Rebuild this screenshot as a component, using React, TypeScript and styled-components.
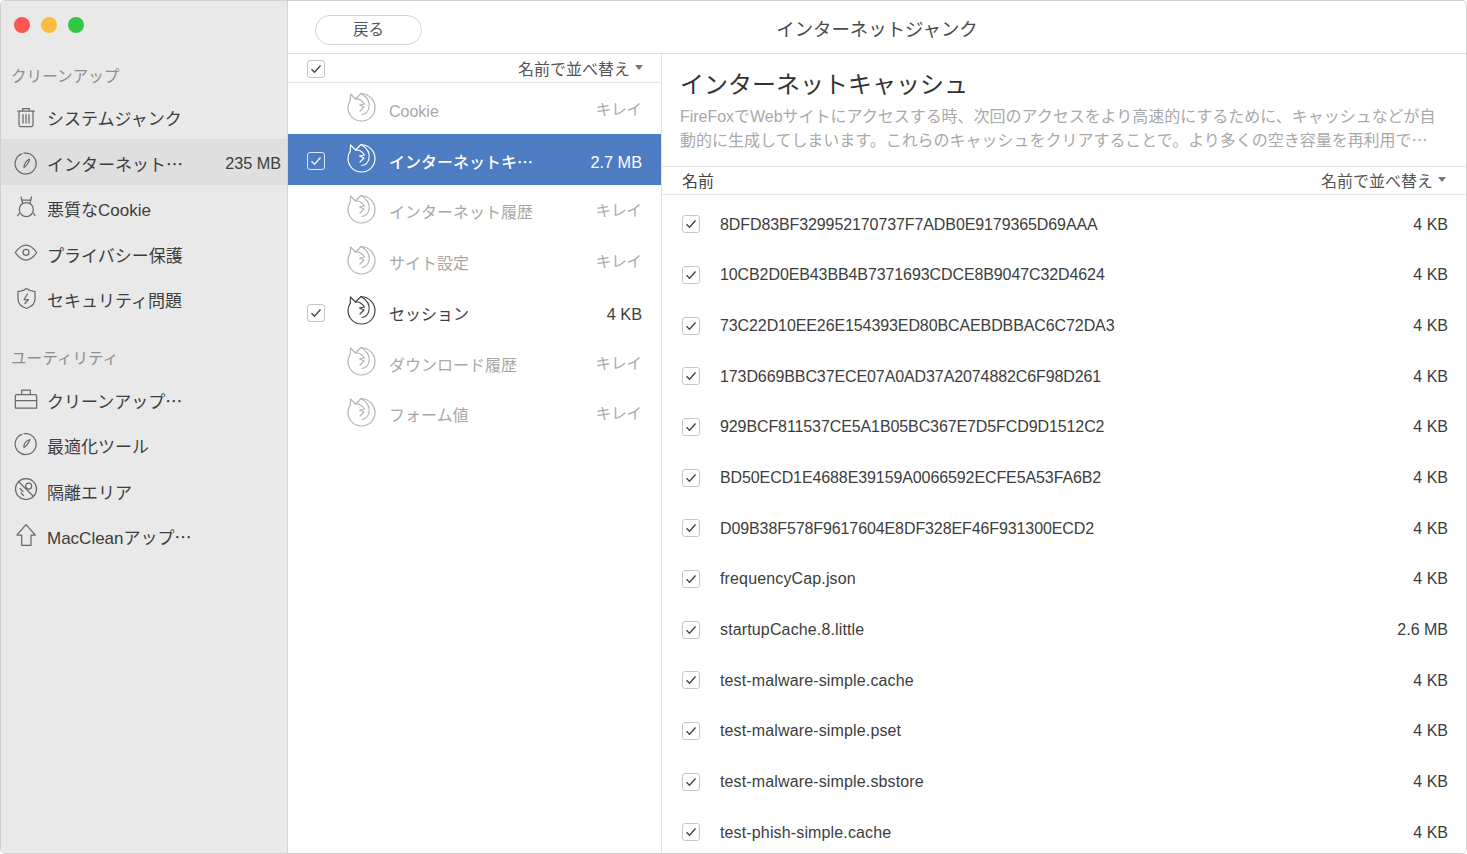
import React from "react";
import styled, { createGlobalStyle } from "styled-components";

const Global = createGlobalStyle`
  html, body { margin: 0; padding: 0; background: #fff; }
  body { font-family: "Liberation Sans", "Noto Sans CJK JP", sans-serif; }
  * { box-sizing: border-box; }
`;

const Win = styled.div`
  width: 1467px; height: 854px; display: flex; overflow: hidden;
  border: 1px solid #cfcfcf; border-radius: 5px; background: #fff;
`;
const Sidebar = styled.aside`
  width: 287px; flex: none; background: #e9e9e9; border-right: 1px solid #d4d4d4;
  display: flex; flex-direction: column;
`;
const Lights = styled.div`
  display: flex; gap: 11px; padding: 16px 0 0 13px; height: 60px;
`;
const Light = styled.span<{ $c: string }>`
  width: 16px; height: 16px; border-radius: 50%; background: ${p => p.$c};
`;
const SectionLabel = styled.div<{ $top: number; $bottom: number }>`
  font-size: 15.6px; line-height: 30px; height: 28px; color: #8d8d8d; padding-left: 10px;
  margin-top: ${p => p.$top}px; margin-bottom: ${p => p.$bottom}px;
`;
const NavItem = styled.div<{ $active?: boolean }>`
  height: ${p => (p.$active ? 46 : 45.5)}px; display: flex; align-items: center; padding: ${p => (p.$active ? 2 : 0)}px 6px 0 12px; gap: 9px;
  margin: ${p => (p.$active ? "-1.5px 0 1px" : "0")};
  background: ${p => (p.$active ? "#dfdfdf" : "transparent")}; color: #3d3d3d; font-size: 17px;
`;
const NavLabel = styled.span`flex: 1; white-space: nowrap;`;
const NavValue = styled.span`font-size: 16.2px; color: #3d3d3d;`;
const NavIcon = styled.svg`
  width: 25px; height: 26px; flex: none; fill: none; stroke: #6a6a6a; stroke-width: 1.25;
  stroke-linecap: round; stroke-linejoin: round;
`;

const Main = styled.div`flex: 1; display: flex; flex-direction: column; min-width: 0;`;
const TopBar = styled.header`
  height: 53px; flex: none; border-bottom: 1px solid #dcdcdc; display: grid;
  grid-template-columns: 1fr auto 1fr; align-items: center;
`;
const BackButton = styled.button`
  justify-self: start; width: 107px; height: 30px; border: 1px solid #d3d3d3; border-radius: 15px;
  background: #fff; color: #555; font: inherit; font-size: 15.5px; padding: 0 0 4px; margin: 5px 0 0 27px;
`;
const WindowTitle = styled.div`font-size: 18.4px; color: #4a4a4a; padding-top: 2px;`;

const Panes = styled.div`flex: 1; display: flex; min-height: 0;`;
const Middle = styled.section`
  width: 374px; flex: none; border-right: 1px solid #e2e2e2; display: flex; flex-direction: column;
`;
const MiddleHead = styled.div`
  height: 29px; flex: none; border-bottom: 1px solid #e6e6e6; display: flex; align-items: center;
  justify-content: space-between; padding: 0 18px 0 19px;
`;
const HeadBox = styled.span`display: flex; margin-top: 2px;`;
const Sort = styled.span`
  font-size: 16px; color: #555; display: inline-flex; align-items: center; gap: 5px; white-space: nowrap;
  &::after {
    content: ""; border-left: 4.5px solid transparent; border-right: 4.5px solid transparent;
    border-top: 5px solid #777; margin-top: -1px;
  }
`;
const Box = styled.span<{ $inverse?: boolean }>`
  width: 18px; height: 18px; flex: none; display: inline-flex; align-items: center; justify-content: center;
  border: 1px solid ${p => (p.$inverse ? "#dfe8f6" : "#c6c6c6")}; border-radius: 3px;
  background: ${p => (p.$inverse ? "transparent" : "#fff")};
`;
const Tick = styled.svg<{ $inverse?: boolean }>`
  width: 12px; height: 10px; fill: none; stroke-width: 1.4;
  stroke: ${p => (p.$inverse ? "#eaf0fa" : "#444")};
`;
const CategoryRow = styled.div<{ $selected?: boolean }>`
  height: 50.75px; display: flex; align-items: center; padding: 0 19px;
  background: ${p => (p.$selected ? "#4e7cc2" : "transparent")};
`;
const BoxSlot = styled.span`width: 18px; flex: none; display: flex; margin-top: 4px;`;
const FoxIcon = styled.svg<{ $tone: string }>`
  width: 30px; height: 31px; flex: none; margin: -1px 0 0 22px; fill: none; stroke: ${p => p.$tone};
  stroke-width: 1.2; stroke-linecap: round; stroke-linejoin: round;
`;
const CatName = styled.span<{ $tone: string; $bold?: boolean }>`
  flex: 1; margin-left: 12px; font-size: 16px; line-height: 20px; color: ${p => p.$tone};
  font-weight: ${p => (p.$bold ? 500 : 400)}; white-space: nowrap; margin-top: 7px;
`;
const CatValue = styled.span<{ $tone: string; $muted?: boolean; $bold?: boolean }>`
  font-size: ${p => (p.$muted ? 15.4 : 16.3)}px; color: ${p => p.$tone}; white-space: nowrap;
  margin-top: ${p => (p.$muted ? -1 : 7)}px; font-weight: ${p => (p.$bold ? 500 : 400)};
`;

const Detail = styled.section`flex: 1; display: flex; flex-direction: column; min-width: 0;`;
const Intro = styled.div`
  height: 113px; flex: none; padding: 14px 18px 0 18px; border-bottom: 1px solid #e4e4e4;
`;
const IntroTitle = styled.h1`
  margin: 0 0 4px; font-size: 24px; line-height: 33px; font-weight: 400; color: #333; white-space: nowrap;
`;
const IntroLine = styled.div`
  font-size: 16px; line-height: 24px; color: #a9a9a9; white-space: nowrap; letter-spacing: -0.02px;
`;
const TableHead = styled.div`
  height: 28px; flex: none; border-bottom: 1px solid #e4e4e4; display: flex; align-items: center;
  justify-content: space-between; padding: 0 20px 2px 20px;
`;
const ColName = styled.span`font-size: 16px; color: #444;`;
const FileList = styled.div`flex: 1; padding-top: 4px; overflow: hidden;`;
const FileRow = styled.div`
  height: 50.67px; display: flex; align-items: center; padding: 0 18px 0 20px;
`;
const FileName = styled.span<{ $hash: boolean }>`
  flex: 1; margin: 1px 0 0 20px; font-size: 16px; color: #3d3d3d; white-space: nowrap;
  letter-spacing: ${p => (p.$hash ? -0.1 : 0.14)}px;
`;
const FileSize = styled.span`font-size: 16px; color: #3d3d3d; white-space: nowrap; margin-top: 1px;`;

const Check = ({ inverse }: { inverse?: boolean }) => (
  <Box $inverse={inverse}>
    <Tick $inverse={inverse} viewBox="0 0 12 10"><path d="M1.5 5.2 4.5 8.2 10.5 1.5" /></Tick>
  </Box>
);

const Fox = ({ tone }: { tone: string }) => (
  <FoxIcon $tone={tone} viewBox="0 0 30 31">
    <path d="M3.5 2C3.300 5 3.300 6.800 3.300 8.200 1.800 10.400 1 12.800 1 15.500 1 23 7 29 14.500 29S28 23 28 15.500C28 8 22 2 14 1.500L8.500 7Z" />
    <path d="M14 1.500C20 5 23 10 22 15.500 21.200 19.500 18.500 22 15 22.500" />
    <path d="M8.500 7C11 6.800 13.500 7.500 15.500 9.500L17.500 12 12.500 13 17 15 13 19" />
  </FoxIcon>
);

const icons: Record<string, React.ReactNode> = {
  trash: <path d="M4.700 6h16.600M9.600 6V3.500h6.700V6M6 6v14a1.500 1.500 0 0 0 1.500 1.500h11a1.500 1.500 0 0 0 1.500-1.500V6M10 9.500v8.500M13 9.500v8.500M16 9.500v8.500" />,
  compass: <><path d="M8.800 3.800A10.500 10.500 0 1 0 11 3.200" /><path d="M16.500 9C16 12 14.500 15 11 17.500 11 14 13 11 16.500 9Z" /></>,
  bug: <><circle cx="13.300" cy="13.500" r="7" /><path d="M8 1 9.500 7M18.500 1 17 7M9 4h8.500M6.500 17 4.700 19.700M20.100 17 22 19.700" /></>,
  eye: <><path d="M2.300 11.500C6 6 9.500 4 13 4S20 6 23.700 11.500C20 17 16.500 19 13 19S6 17 2.300 11.500Z" /><circle cx="13" cy="11.300" r="3" /></>,
  shield: <><path d="M13.500 1.500C16 3.500 19 4.500 22 4.500V12C22 17 18 20 13.500 21.500 9 20 5 17 5 12V4.500C8 4.500 11 3.500 13.500 1.500Z" /><path d="M14.500 7 11 12.500H15.500L12 16.500" /></>,
  case: <path d="M2.300 9a1.400 1.400 0 0 1 1.400-1.400h18.600a1.400 1.400 0 0 1 1.400 1.400v12H2.300ZM8.700 7.600V3h8.600v4.600M2.300 13.700h21.400" />,
  gauge: <><path d="M8.800 1.300A10.500 10.500 0 1 0 11 0.700" /><path d="M17 6.500C16 9 14.500 12.500 11 14.500 10.500 11 13 8 17 6.500Z" /></>,
  quarantine: <><circle cx="13" cy="11" r="10.500" /><circle cx="15.700" cy="8" r="3" /><path d="M5.500 3.500 20.500 18.500M7 10.500 10 13.500M8 15l2.500 2.500" /></>,
  up: <path d="M13 0.700 4 11H8.700V21.300H18V11H22.300Z" />,
};

const Nav = ({ icon, label, value, active }: { icon: string; label: string; value?: string; active?: boolean }) => (
  <NavItem $active={active}>
    <NavIcon viewBox="0 0 25 26">{icons[icon]}</NavIcon>
    <NavLabel>{label}</NavLabel>
    {value && <NavValue>{value}</NavValue>}
  </NavItem>
);

const categories = [
  { name: "Cookie", value: "キレイ" },
  { name: "インターネットキ⋯", value: "2.7 MB", selected: true, checked: true },
  { name: "インターネット履歴", value: "キレイ" },
  { name: "サイト設定", value: "キレイ" },
  { name: "セッション", value: "4 KB", checked: true },
  { name: "ダウンロード履歴", value: "キレイ" },
  { name: "フォーム値", value: "キレイ" },
];

const files: [string, string][] = [
  ["8DFD83BF329952170737F7ADB0E9179365D69AAA", "4 KB"],
  ["10CB2D0EB43BB4B7371693CDCE8B9047C32D4624", "4 KB"],
  ["73C22D10EE26E154393ED80BCAEBDBBAC6C72DA3", "4 KB"],
  ["173D669BBC37ECE07A0AD37A2074882C6F98D261", "4 KB"],
  ["929BCF811537CE5A1B05BC367E7D5FCD9D1512C2", "4 KB"],
  ["BD50ECD1E4688E39159A0066592ECFE5A53FA6B2", "4 KB"],
  ["D09B38F578F9617604E8DF328EF46F931300ECD2", "4 KB"],
  ["frequencyCap.json", "4 KB"],
  ["startupCache.8.little", "2.6 MB"],
  ["test-malware-simple.cache", "4 KB"],
  ["test-malware-simple.pset", "4 KB"],
  ["test-malware-simple.sbstore", "4 KB"],
  ["test-phish-simple.cache", "4 KB"],
];

export default function App() {
  return (
    <>
      <Global />
      <Win lang="ja">
        <Sidebar>
          <Lights>
            <Light $c="#fc5753" />
            <Light $c="#fdbc40" />
            <Light $c="#33c748" />
          </Lights>
          <SectionLabel $top={1} $bottom={5}>クリーンアップ</SectionLabel>
          <Nav icon="trash" label="システムジャンク" />
          <Nav icon="compass" label="インターネット⋯" value="235 MB" active />
          <Nav icon="bug" label="悪質なCookie" />
          <Nav icon="eye" label="プライバシー保護" />
          <Nav icon="shield" label="セキュリティ問題" />
          <SectionLabel $top={21} $bottom={6}>ユーティリティ</SectionLabel>
          <Nav icon="case" label="クリーンアップ⋯" />
          <Nav icon="gauge" label="最適化ツール" />
          <Nav icon="quarantine" label="隔離エリア" />
          <Nav icon="up" label="MacCleanアップ⋯" />
        </Sidebar>
        <Main>
          <TopBar>
            <BackButton>戻る</BackButton>
            <WindowTitle>インターネットジャンク</WindowTitle>
            <span />
          </TopBar>
          <Panes>
            <Middle>
              <MiddleHead>
                <HeadBox><Check /></HeadBox>
                <Sort>名前で並べ替え</Sort>
              </MiddleHead>
              {categories.map(c => {
                const clean = c.value === "キレイ";
                const tone = c.selected ? "#fff" : clean ? "#a8a8a8" : "#3d3d3d";
                return (
                  <CategoryRow key={c.name} $selected={c.selected}>
                    <BoxSlot>{c.checked && <Check inverse={c.selected} />}</BoxSlot>
                    <Fox tone={c.selected ? "#fff" : clean ? "#b4b4b4" : "#444"} />
                    <CatName $tone={tone} $bold={c.selected}>{c.name}</CatName>
                    <CatValue $tone={tone} $muted={clean} $bold={c.selected}>{c.value}</CatValue>
                  </CategoryRow>
                );
              })}
            </Middle>
            <Detail>
              <Intro>
                <IntroTitle>インターネットキャッシュ</IntroTitle>
                <IntroLine>FireFoxでWebサイトにアクセスする時、次回のアクセスをより高速的にするために、キャッシュなどが自</IntroLine>
                <IntroLine>動的に生成してしまいます。これらのキャッシュをクリアすることで。より多くの空き容量を再利用で⋯</IntroLine>
              </Intro>
              <TableHead>
                <ColName>名前</ColName>
                <Sort>名前で並べ替え</Sort>
              </TableHead>
              <FileList>
                {files.map(([n, s]) => (
                  <FileRow key={n}>
                    <Check />
                    <FileName $hash={/^[0-9A-F]+$/.test(n)}>{n}</FileName>
                    <FileSize>{s}</FileSize>
                  </FileRow>
                ))}
              </FileList>
            </Detail>
          </Panes>
        </Main>
      </Win>
    </>
  );
}
